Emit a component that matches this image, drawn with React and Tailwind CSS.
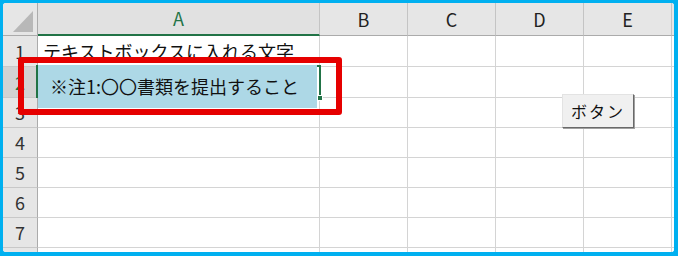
import React from 'react';

const cols = [
  { name: 'A', w: 'w-[282px]' },
  { name: 'B', w: 'w-[88px]' },
  { name: 'C', w: 'w-[88px]' },
  { name: 'D', w: 'w-[88px]' },
  { name: 'E', w: 'w-[88px]' },
];

const rows = [
  { n: 1, h: 'h-[31px]', text: 'テキストボックスに入れる文字' },
  { n: 2, h: 'h-[31px]', active: true },
  { n: 3, h: 'h-[30px]' },
  { n: 4, h: 'h-[30px]' },
  { n: 5, h: 'h-[30px]' },
  { n: 6, h: 'h-[30px]' },
  { n: 7, h: 'h-[30px]' },
  { n: '', h: 'h-[30px]' },
];

const font = { fontFamily: '"Noto Sans CJK JP", "Noto Sans", sans-serif' };

function HeaderRow() {
  return (
    <div className="flex h-[33px] shrink-0">
      <div className="w-[35px] shrink-0 bg-[#e6e6e6] border-r border-b border-[#ababab] relative">
        <svg width="34" height="32" className="absolute left-0 top-0">
          <polygon points="10,29 30,29 30,8" fill="#b8b8b8" />
        </svg>
      </div>
      {cols.map((c) =>
        c.name === 'A' ? (
          <div
            key={c.name}
            className={`${c.w} shrink-0 bg-[#e1e1e1] border-r border-r-[#c4c4c4] border-b-2 border-b-[#217346] flex items-center justify-center text-[18px] text-[#217346]`}
          >
            {c.name}
          </div>
        ) : (
          <div
            key={c.name}
            className={`${c.w} shrink-0 bg-[#e6e6e6] border-r border-r-[#c4c4c4] border-b border-b-[#ababab] flex items-center justify-center text-[18px] text-[#222]`}
          >
            {c.name}
          </div>
        )
      )}
      <div className="flex-1 bg-[#e6e6e6] border-b border-[#ababab]" />
    </div>
  );
}

function Row({ row }) {
  return (
    <div className={`flex ${row.h} shrink-0`}>
      <div
        className={`w-[35px] shrink-0 border-r border-r-[#ababab] border-b border-b-[#c8c8c8] flex items-center justify-center text-[18px] ${
          row.active ? 'bg-[#d2d2d2] text-[#217346]' : 'bg-[#e6e6e6] text-[#333]'
        }`}
      >
        {row.n}
      </div>
      {cols.map((c, i) => (
        <div
          key={c.name}
          className={`${c.w} shrink-0 bg-white border-r border-b border-[#d4d4d4] flex items-center pl-[5px] text-[18px] text-[#111] whitespace-nowrap`}
        >
          {i === 0 && row.text}
        </div>
      ))}
      <div className="flex-1 bg-white border-b border-[#d4d4d4]" />
    </div>
  );
}

export default function App() {
  return (
    <div className="w-[678px] h-[256px] bg-[#00b0f0] pt-[3px] pl-[3px] pr-[4px] pb-[4px]" style={font}>
      <div className="relative w-full h-full bg-white rounded-[3px] overflow-hidden flex flex-col">
        <HeaderRow />
        {rows.map((r, i) => (
          <Row key={i} row={r} />
        ))}

        {/* active cell A2 */}
        <div className="absolute left-[33px] top-[62px] w-[285px] h-[33px] border-2 border-[#217346]" />
        {/* text box */}
        <div className="absolute left-[35px] top-[62px] w-[279px] h-[43px] bg-[#add8e6] flex items-center pl-[12px] text-[18px] text-[#111] whitespace-nowrap">
          ※注1:〇〇書類を提出すること
        </div>
        {/* fill handle */}
        <div className="absolute left-[314px] top-[92px] w-[6px] h-[6px] bg-[#217346] border border-white" />
        {/* highlight */}
        <div className="absolute left-[15px] top-[54px] w-[324px] h-[58px] border-[6px] border-[#e60000] rounded-[3px]" />

        <button className="absolute left-[559px] top-[91px] w-[72px] h-[34px] bg-[#f0f0f0] border border-t-[#e3e3e3] border-l-[#e3e3e3] border-r-[#696969] border-b-[#696969] shadow-[1px_1px_0_#a0a0a0] flex items-center justify-center text-[16px] text-[#111] tracking-[2px]">
          ボタン
        </button>
      </div>
    </div>
  );
}
